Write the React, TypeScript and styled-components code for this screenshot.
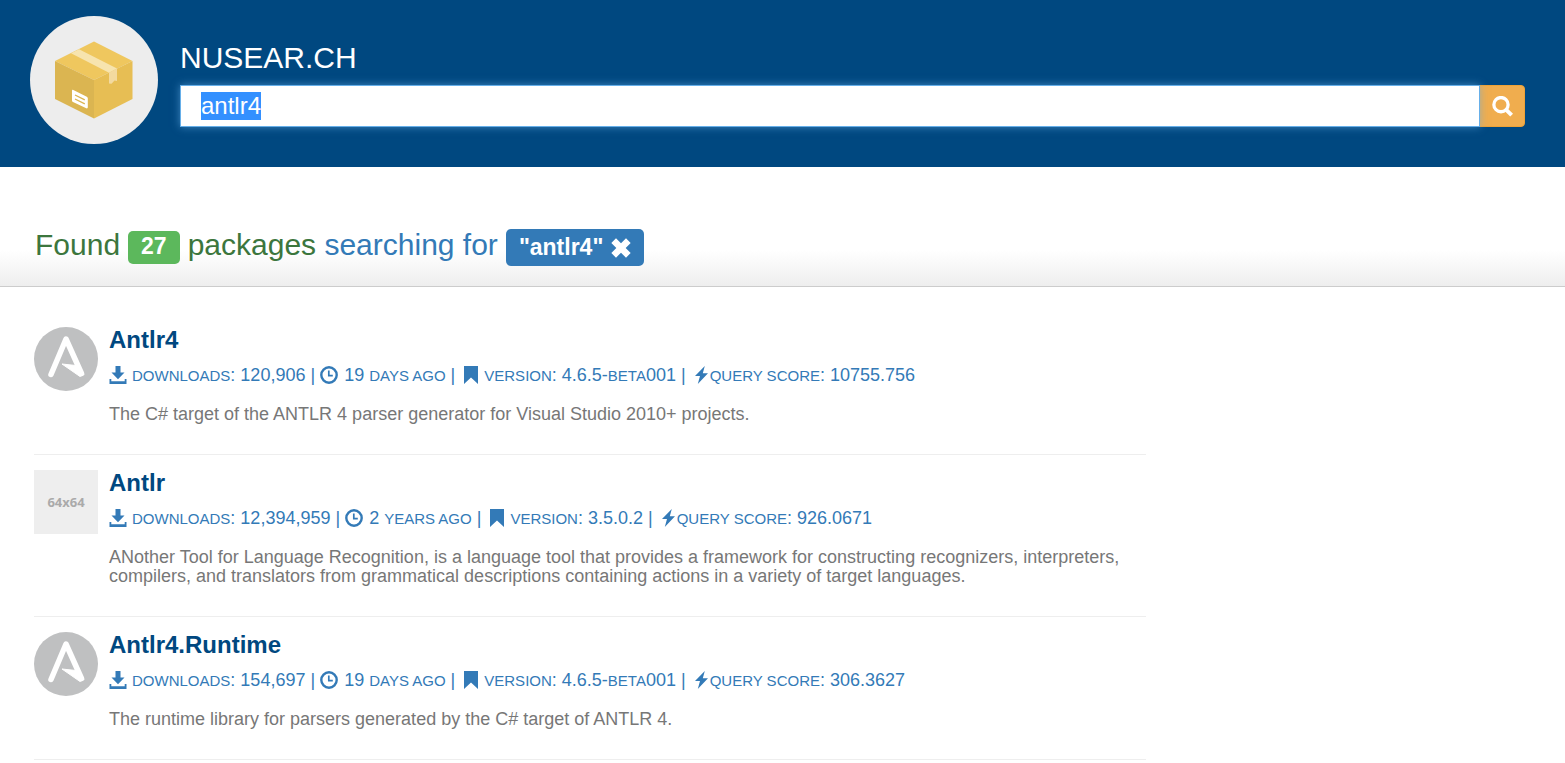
import React, { useEffect, useRef, useState } from "react";
import styled, { createGlobalStyle } from "styled-components";

const GlobalStyle = createGlobalStyle`
  *, *::before, *::after { box-sizing: border-box; }
  body {
    margin: 0;
    background: #fff;
    color: #777;
    font: 18px/20px "Liberation Sans", Arial, sans-serif;
  }
`;

const Header = styled.header`
  display: flex;
  gap: 22px;
  padding: 16px 40px 23px 30px;
  background: #004880;
`;

const LogoLink = styled.a`
  display: block;
  flex: none;
  width: 128px;
  height: 128px;
  svg { display: block; }
`;

const HeaderBody = styled.div`
  flex: 1;
  padding-top: 24px;
`;

const SiteTitle = styled.h1`
  margin: 0 0 9px;
  color: #fff;
  font-size: 30px;
  font-weight: 400;
  line-height: 36px;
`;

const SearchForm = styled.form`
  display: flex;
`;

const SearchInput = styled.input`
  position: relative;
  z-index: 1;
  flex: 1;
  min-width: 0;
  height: 42px;
  padding: 0 20px;
  border: 1px solid #66afe9;
  border-radius: 0;
  outline: 0;
  background: #fff;
  color: #333;
  font: 24px/28px "Liberation Sans", Arial, sans-serif;
  box-shadow: 0 0 8px rgba(102, 175, 233, 0.6);
  &::selection { background: #3390ff; color: #fff; }
`;

const SearchButton = styled.button`
  display: flex;
  align-items: center;
  justify-content: center;
  width: 46px;
  height: 42px;
  margin-left: -1px;
  padding: 0;
  border: 1px solid #eea236;
  border-radius: 0 4px 4px 0;
  background: #f0ad4e;
  color: #fff;
  cursor: pointer;
`;

const Summary = styled.section`
  padding: 60px 35px 20px;
  border-bottom: 1px solid #ccc;
  background: linear-gradient(to bottom, #fff 70%, #eee 100%);
`;

const SummaryTitle = styled.h2`
  display: flex;
  align-items: flex-start;
  flex-wrap: wrap;
  gap: 8px;
  margin: 0;
  color: #3c763d;
  font-size: 30px;
  font-weight: 400;
  line-height: 36px;
`;

const SearchingFor = styled.span`
  color: #337ab7;
`;

const CountBadge = styled.span`
  margin-top: 4px;
  padding: 0 13px 2px;
  border-radius: 5px;
  background: #5cb85c;
  color: #fff;
  font-size: 23px;
  font-weight: 700;
  line-height: 31px;
`;

const TermButton = styled.button`
  display: flex;
  align-items: center;
  gap: 8px;
  margin-top: 2px;
  padding: 0 13px;
  border: 0;
  border-radius: 5px;
  background: #337ab7;
  color: #fff;
  font: 700 23px/37px "Liberation Sans", Arial, sans-serif;
  cursor: pointer;
`;

const Results = styled.main`
  width: 75%;
  padding: 25px 28px 0 34px;
`;

const Package = styled.article`
  display: flex;
  gap: 11px;
  padding: 15px 0 30px;
  border-bottom: 1px solid #eee;
`;

const Thumb = styled.div`
  flex: none;
  width: 64px;
  height: 64px;
  svg { display: block; }
`;

const Placeholder = styled(Thumb)`
  display: flex;
  align-items: center;
  justify-content: center;
  background: #eee;
  color: #aaa;
  font: 700 13px/16px "Open Sans", sans-serif;
`;

const PackageBody = styled.div`
  flex: 1;
`;

const PackageName = styled.h3`
  margin: 0 0 9px;
  font-size: 24px;
  line-height: 26px;
  a { color: #004880; text-decoration: none; }
`;

const Meta = styled.p`
  display: flex;
  flex-wrap: wrap;
  align-items: center;
  gap: 5px;
  margin: 0 0 16px;
  color: #337ab7;
  line-height: 26px;
`;

const MetaItem = styled.span<{ $gap?: number; $indent?: number }>`
  display: inline-flex;
  align-items: center;
  gap: ${(p) => p.$gap ?? 5}px;
  padding-left: ${(p) => p.$indent ?? 0}px;
  svg { margin-bottom: 2px; }
`;

const Caps = styled.span`
  font-size: 15px;
  text-transform: uppercase;
`;

const Description = styled.p`
  margin: 0;
  line-height: 19px;
`;

const GlyphSvg = styled.svg`
  flex: none;
  display: block;
`;

type GlyphProps = { size?: number; width?: number; children: React.ReactNode };
const Glyph = ({ size = 18, width = 18, children }: GlyphProps) => (
  <GlyphSvg width={(size * width) / 18} height={size} viewBox={`0 0 ${width} 18`} fill="currentColor" aria-hidden="true">
    {children}
  </GlyphSvg>
);

const DownloadGlyph = () => (
  <Glyph><path d="M6.500 0h5v6.500h4L9 13.200 2.500 6.500h4zM.5 13h1.800v2.200h13.400V13h1.800v5H.5z" /></Glyph>
);
const ClockGlyph = () => (
  <Glyph>
    <circle cx="9" cy="9" r="7.700" fill="none" stroke="currentColor" strokeWidth="2.400" />
    <path d="M8.800 4.500V9.700H12.800" fill="none" stroke="currentColor" strokeWidth="1.700" />
  </Glyph>
);
const BookmarkGlyph = () => (
  <Glyph width={14}><path d="M0 0h14v18l-7-6.500L0 18z" /></Glyph>
);
const FlashGlyph = () => (
  <Glyph width={13}><path d="M9.800 0 0 10h5L2.800 18 13 7.300H7.800z" /></Glyph>
);
const RemoveGlyph = () => (
  <Glyph size={20}><path d="M4.500.3 9 4.800 13.500.3 17.700 4.500 13.200 9 17.700 13.500 13.500 17.700 9 13.200 4.500 17.700.3 13.500 4.800 9 .3 4.500z" /></Glyph>
);
const SearchGlyph = () => (
  <Glyph size={21}>
    <circle cx="7.700" cy="7.400" r="6.100" fill="none" stroke="currentColor" strokeWidth="2.800" />
    <path d="m11.800 11.400 5 5" stroke="currentColor" strokeWidth="3.400" />
  </Glyph>
);

const BoxLogo = () => (
  <svg width="128" height="128" viewBox="0 0 128 128" aria-hidden="true">
    <circle cx="64" cy="64" r="64" fill="#ededed" />
    <path d="M64 25.500 102.500 45 64 64 25 45z" fill="#efc75e" />
    <path d="M25 45 64 64v38.500L25 83z" fill="#dbb551" />
    <path d="M102.500 45v38L64 102.500V64z" fill="#e7be54" />
    <path d="M49 33.300 87 52.500l-8 4.200L41 37.300z" fill="#f7e4ae" />
    <path d="M87 52.500v12.500l-2.500-.5-3 3.300-2.500-.3V56.700z" fill="#f3daa0" />
    <path d="M43.300 74c-1-.4-1.300 0-1.300 1V84.500q0 1 1 1.500l13.300 6.300q1.500.5 1.500-1V82.300q0-1-1-1.500z" fill="#fff" />
    <path d="m45 79 9.800 4.800M45 83l9.800 4.800" stroke="#dbb551" strokeWidth="1.300" />
  </svg>
);

const ParserLogo = () => (
  <svg width="64" height="64" viewBox="0 0 64 64" aria-hidden="true">
    <circle cx="32" cy="32" r="32" fill="#bfc0c1" />
    <path d="M17 47.500 32 12 47.500 46.500" fill="none" stroke="#fff" strokeWidth="5.500" strokeLinecap="round" strokeLinejoin="round" />
    <path d="M28 37 42 38.500 50 47.500 46 49.500z" fill="#fff" stroke="#fff" strokeWidth="1" strokeLinejoin="round" />
  </svg>
);

type Pkg = {
  name: string;
  downloads: string;
  age: [string, string];
  version: [string, string, string];
  score: string;
  text: string;
  logo: boolean;
};

const packages: Pkg[] = [
  {
    name: "Antlr4", downloads: "120,906", age: ["19", "days ago"], version: ["4.6.5-", "beta", "001"],
    score: "10755.756", logo: true,
    text: "The C# target of the ANTLR 4 parser generator for Visual Studio 2010+ projects.",
  },
  {
    name: "Antlr", downloads: "12,394,959", age: ["2", "years ago"], version: ["3.5.0.2", "", ""],
    score: "926.0671", logo: false,
    text: "ANother Tool for Language Recognition, is a language tool that provides a framework for constructing recognizers, interpreters, compilers, and translators from grammatical descriptions containing actions in a variety of target languages.",
  },
  {
    name: "Antlr4.Runtime", downloads: "154,697", age: ["19", "days ago"], version: ["4.6.5-", "beta", "001"],
    score: "306.3627", logo: true,
    text: "The runtime library for parsers generated by the C# target of ANTLR 4.",
  },
];

const PackageRow = ({ pkg }: { pkg: Pkg }) => (
  <Package>
    {pkg.logo ? <Thumb><ParserLogo /></Thumb> : <Placeholder>64x64</Placeholder>}
    <PackageBody>
      <PackageName><a href={`#${pkg.name}`}>{pkg.name}</a></PackageName>
      <Meta>
        <MetaItem><DownloadGlyph /><span><Caps>downloads</Caps>: {pkg.downloads} |</span></MetaItem>
        <MetaItem $gap={6}><ClockGlyph /><span>{pkg.age[0]} <Caps>{pkg.age[1]}</Caps> |</span></MetaItem>
        <MetaItem $gap={6} $indent={4}><BookmarkGlyph />
          <span><Caps>version</Caps>: {pkg.version[0]}<Caps>{pkg.version[1]}</Caps>{pkg.version[2]} |</span>
        </MetaItem>
        <MetaItem $gap={2} $indent={4}><FlashGlyph /><span><Caps>query score</Caps>: {pkg.score}</span></MetaItem>
      </Meta>
      <Description>{pkg.text}</Description>
    </PackageBody>
  </Package>
);

export default function App() {
  const [query, setQuery] = useState("antlr4");
  const input = useRef<HTMLInputElement>(null);

  useEffect(() => {
    input.current?.focus();
    input.current?.select();
  }, []);

  return (
    <>
      <GlobalStyle />
      <Header>
        <LogoLink href="#home" aria-label="Home"><BoxLogo /></LogoLink>
        <HeaderBody>
          <SiteTitle>NUSEAR.CH</SiteTitle>
          <SearchForm onSubmit={(e) => e.preventDefault()}>
            <SearchInput ref={input} aria-label="Search packages" value={query} onChange={(e) => setQuery(e.target.value)} />
            <SearchButton type="submit" aria-label="Search"><SearchGlyph /></SearchButton>
          </SearchForm>
        </HeaderBody>
      </Header>
      <Summary>
        <SummaryTitle>
          <span>Found</span>
          <CountBadge>27</CountBadge>
          <span>packages <SearchingFor>searching for</SearchingFor></span>
          <TermButton type="button">"antlr4"<RemoveGlyph /></TermButton>
        </SummaryTitle>
      </Summary>
      <Results>
        {packages.map((pkg) => <PackageRow key={pkg.name} pkg={pkg} />)}
      </Results>
    </>
  );
}
